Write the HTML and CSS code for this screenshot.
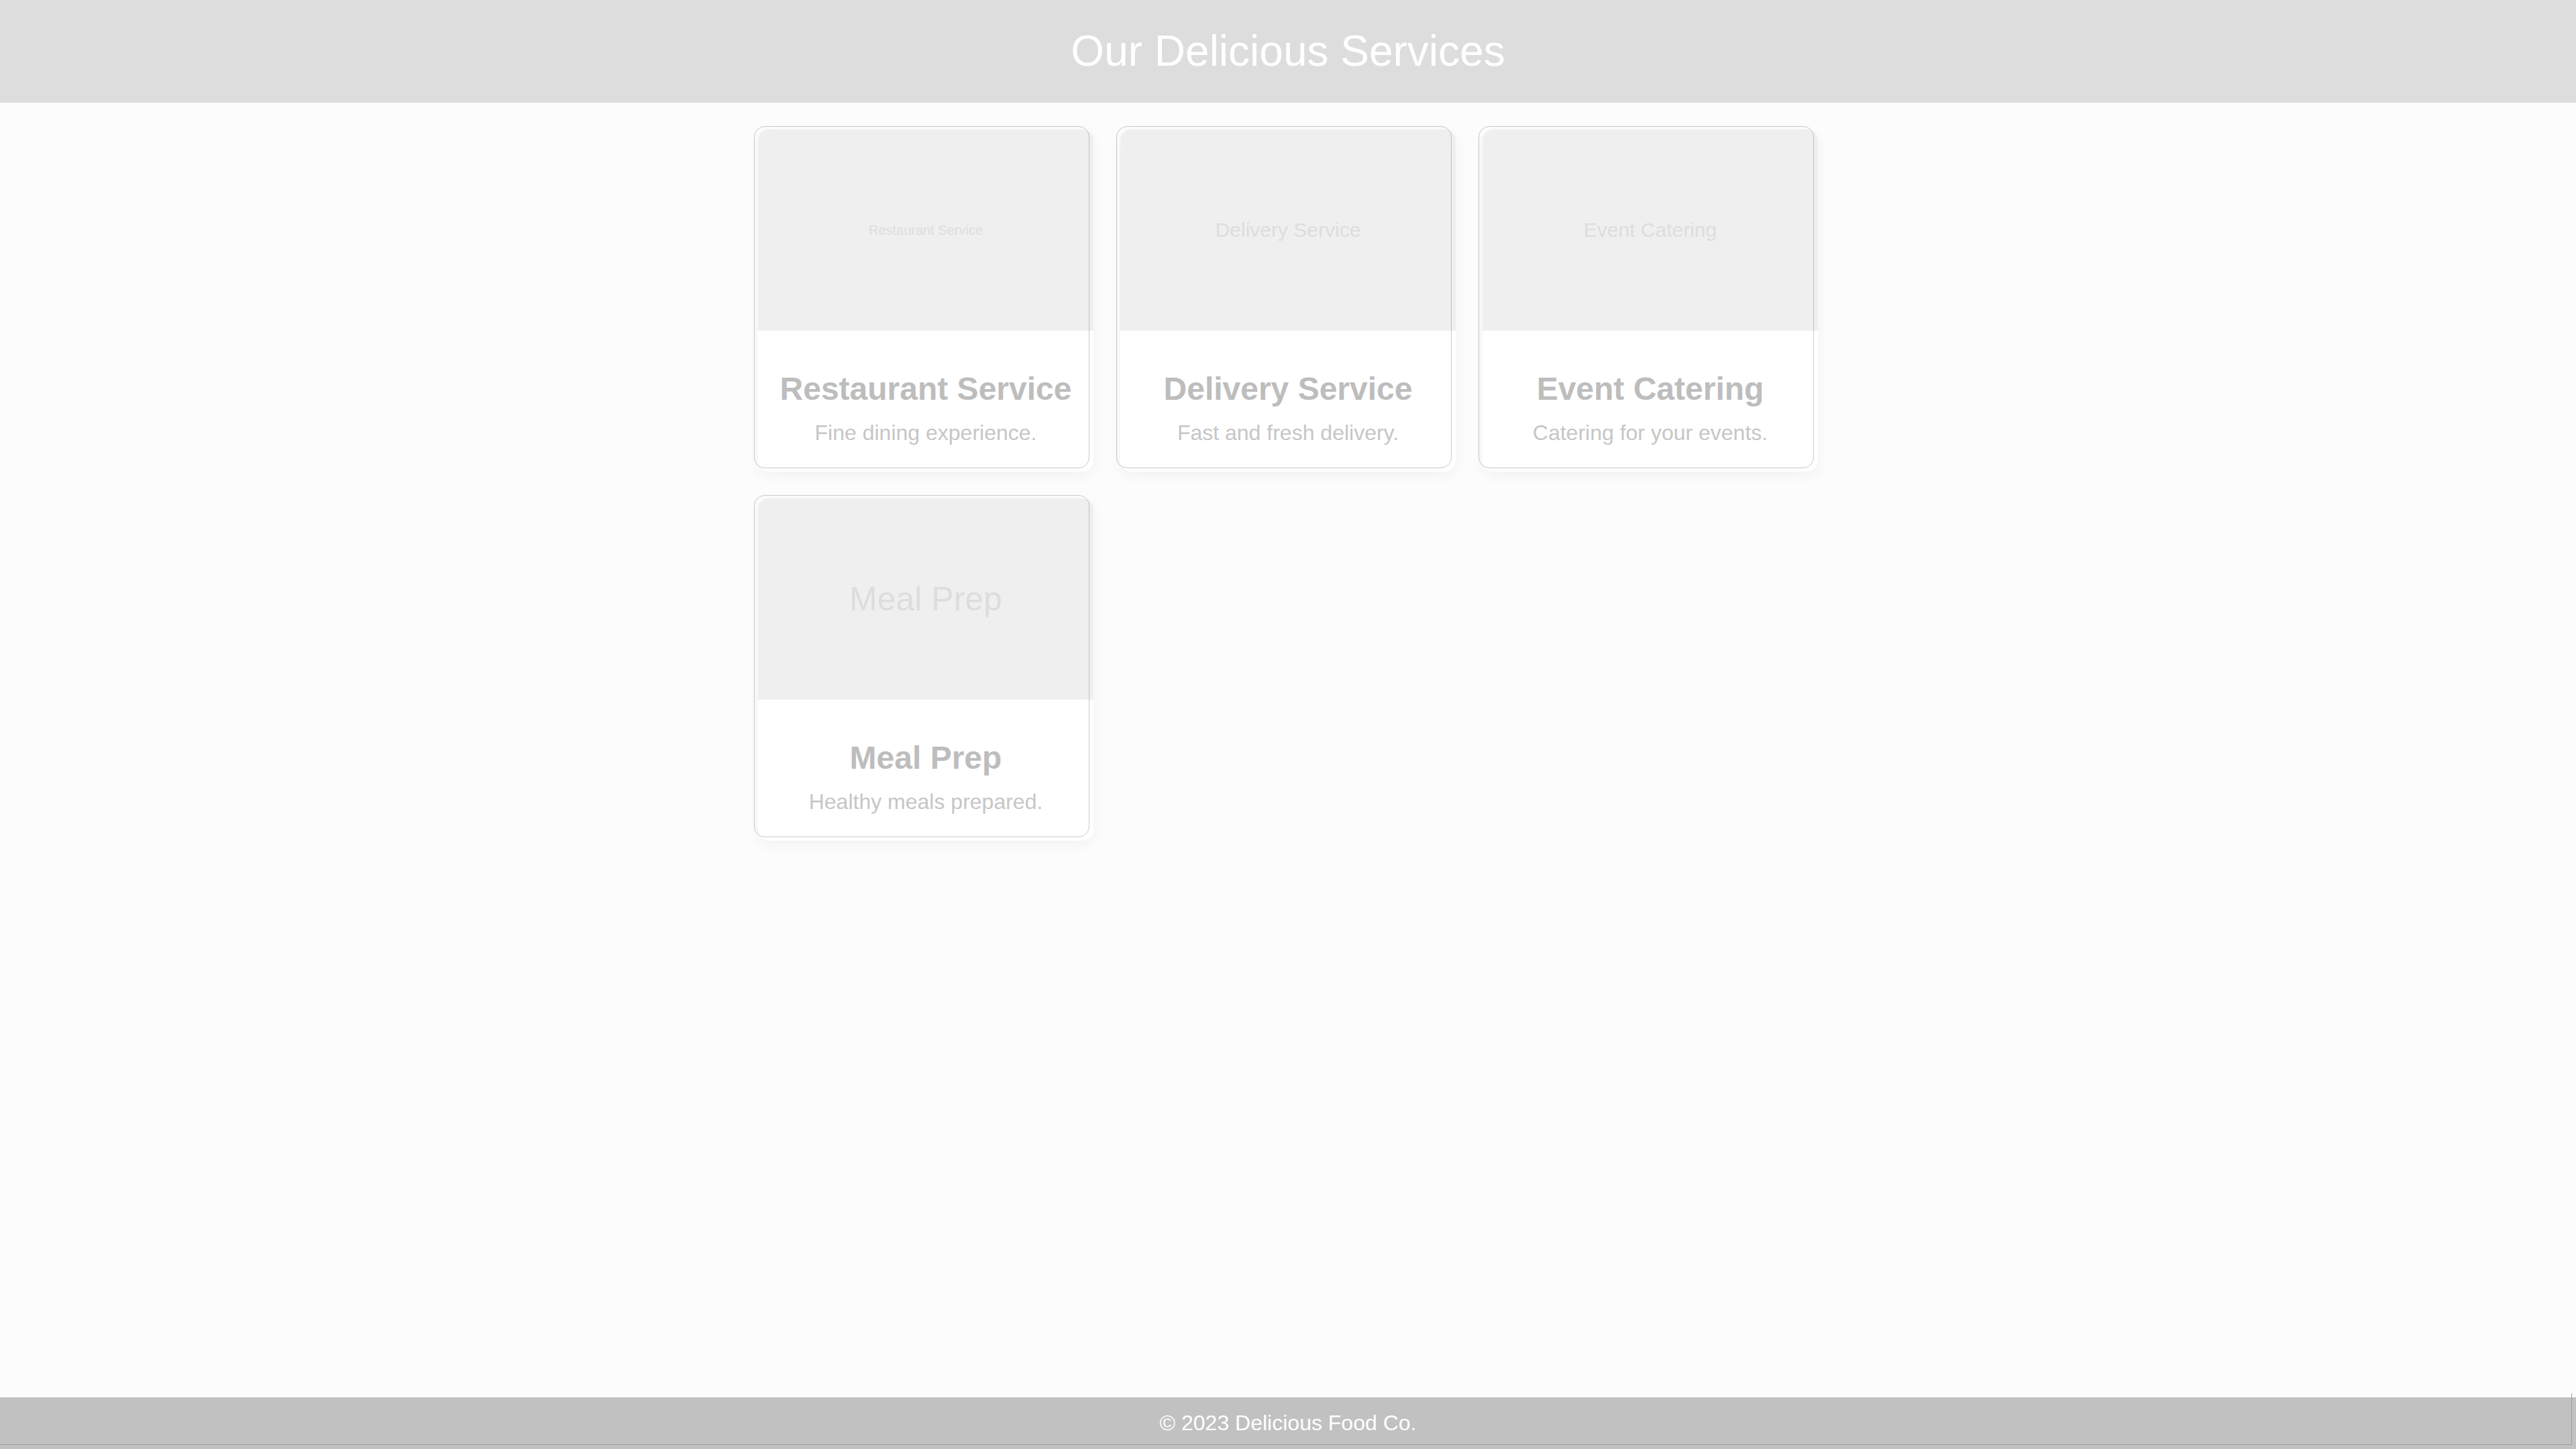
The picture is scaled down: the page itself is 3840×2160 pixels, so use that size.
FILE: index.html
```html
<!DOCTYPE html>
<html lang="en">
<head>
<meta charset="utf-8">
<title>Our Delicious Services</title>
<link rel="stylesheet" href="styles.css">
</head>
<body>
<header class="site-header">
  <h1 class="site-title">Our Delicious Services</h1>
</header>
<main class="services">
  <div class="service-grid">
    <article class="card">
      <div class="card-image"><span class="ph ph-sm">Restaurant Service</span></div>
      <div class="card-body">
        <h3 class="card-title">Restaurant Service</h3>
        <p class="card-text">Fine dining experience.</p>
      </div>
    </article>
    <article class="card">
      <div class="card-image"><span class="ph ph-md">Delivery Service</span></div>
      <div class="card-body">
        <h3 class="card-title">Delivery Service</h3>
        <p class="card-text">Fast and fresh delivery.</p>
      </div>
    </article>
    <article class="card">
      <div class="card-image"><span class="ph ph-md">Event Catering</span></div>
      <div class="card-body">
        <h3 class="card-title">Event Catering</h3>
        <p class="card-text">Catering for your events.</p>
      </div>
    </article>
    <article class="card">
      <div class="card-image"><span class="ph ph-lg">Meal Prep</span></div>
      <div class="card-body">
        <h3 class="card-title">Meal Prep</h3>
        <p class="card-text">Healthy meals prepared.</p>
      </div>
    </article>
  </div>
</main>
<footer class="site-footer">
  <p class="footer-text">&copy; 2023 Delicious Food Co.</p>
</footer>
</body>
</html>
```

FILE: styles.css
```css
* {
  box-sizing: border-box;
}

html, body {
  margin: 0;
  padding: 0;
}

body {
  font-family: "Liberation Sans", Arial, sans-serif;
  background: #fcfcfc;
  min-height: 100vh;
  display: flex;
  flex-direction: column;
}

.site-header {
  background: #dddddd;
  padding: 40px 0;
  text-align: center;
}

.site-title {
  margin: 0;
  font-size: 64px;
  line-height: 73px;
  font-weight: normal;
  color: #ffffff;
}

.services {
  flex: 1;
  padding: 40px 0;
}

.service-grid {
  display: grid;
  grid-template-columns: repeat(3, 500px);
  gap: 40px;
  justify-content: center;
}

.card {
  position: relative;
  background: #ffffff;
  border-radius: 16px;
  box-shadow: 0 6px 20px rgba(0, 0, 0, 0.045);
}

.card::after {
  content: "";
  position: absolute;
  top: -5px;
  left: -6px;
  right: 6px;
  bottom: 5px;
  border: 1px solid rgba(150, 150, 150, 0.5);
  border-radius: 16px;
  pointer-events: none;
}

.card-image {
  height: 300px;
  background: #efefef;
  border-radius: 16px 16px 0 0;
  display: flex;
  align-items: center;
  justify-content: center;
}

.ph {
  color: #dddddd;
  line-height: 1;
}

.ph-sm {
  font-size: 20px;
}

.ph-md {
  font-size: 30px;
}

.ph-lg {
  font-size: 50px;
}

.card-body {
  padding: 59px 30px 39px;
  text-align: center;
}

.card-title {
  margin: 0 0 20px;
  font-size: 48px;
  line-height: 55px;
  font-weight: bold;
  color: #bdbdbd;
}

.card-text {
  margin: 0;
  font-size: 32px;
  line-height: 37px;
  color: #c6c6c6;
}

.site-footer {
  position: relative;
  background: #c1c1c1;
  padding: 20px 0;
  text-align: center;
}

.site-footer::after {
  content: "";
  position: absolute;
  top: -6px;
  left: -6px;
  right: 6px;
  bottom: 6px;
  border-right: 1.5px solid #9f9f9f;
  border-bottom: 1.5px solid #9f9f9f;
  pointer-events: none;
}

.footer-text {
  margin: 0;
  font-size: 32px;
  line-height: 37px;
  color: #ffffff;
}
```
